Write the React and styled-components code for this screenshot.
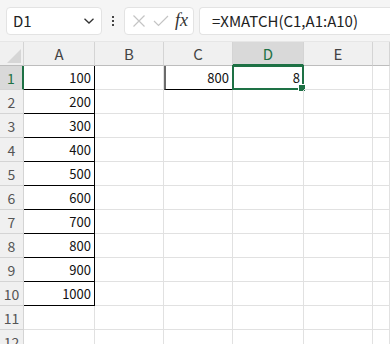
import React from "react";
import styled, { createGlobalStyle } from "styled-components";

const GlobalStyle = createGlobalStyle`
  body {
    margin: 0;
    background: #ffffff;
    font-family: "Noto Sans CJK JP", "Noto Sans", sans-serif;
  }
`;

const GREEN = "#1e7145";
const GRID = "#e1e1e1";

const columns = ["A", "B", "C", "D", "E", ""];
const colWidths = "24px 71px 69px 69px 71px 69px 1fr";
const colA = [100, 200, 300, 400, 500, 600, 700, 800, 900, 1000];

const Page = styled.div`
  width: 390px;
  height: 344px;
  overflow: hidden;
  background: #fff;
`;

const Toolbar = styled.div`
  height: 41px;
  box-sizing: border-box;
  background: #f5f5f5;
  display: flex;
  align-items: center;
  padding: 0 0 0 6px;
`;

const Box = styled.div`
  height: 28px;
  box-sizing: border-box;
  background: #fff;
  border: 1px solid #e3e3e3;
  border-radius: 4px;
  display: flex;
  align-items: center;
`;

const NameBox = styled(Box)`
  width: 96px;
  padding: 0 6px;
  justify-content: space-between;
  font-size: 15px;
  color: #222;
`;

const Dots = styled.div`
  width: 22px;
  display: flex;
  flex-direction: column;
  align-items: center;
  gap: 2px;

  span {
    width: 2px;
    height: 2px;
    background: #444;
  }
`;

const Controls = styled(Box)`
  width: 70px;
  padding: 0 5px 0 7px;
  justify-content: space-between;
`;

const Fx = styled.span`
  font-family: "Liberation Serif", serif;
  font-style: italic;
  font-size: 18px;
  color: #333;
`;

const FormulaBox = styled(Box)`
  flex: 1;
  margin-left: 5px;
  border-right: none;
  border-radius: 4px 0 0 4px;
  padding-left: 12px;
  font-size: 15px;
  color: #222;
`;

const Sheet = styled.div`
  display: grid;
  grid-template-columns: ${colWidths};
  grid-auto-rows: 24px;
  border-top: 1px solid #e6e6e6;
`;

const Corner = styled.div`
  background: #f0f0f0;
  border-right: 1px solid #d4d4d4;
  border-bottom: 1px solid #bdbdbd;
  display: flex;
  align-items: flex-end;
  justify-content: flex-end;
  padding: 0 2px 2px 0;
  box-sizing: border-box;
`;

const ColHead = styled.div`
  background: ${(p) => (p.$active ? "#d9d9d9" : "#f0f0f0")};
  color: ${(p) => (p.$active ? GREEN : "#444")};
  border-right: 1px solid #d4d4d4;
  border-bottom: ${(p) => (p.$active ? `2px solid ${GREEN}` : "1px solid #bdbdbd")};
  box-sizing: border-box;
  display: flex;
  align-items: center;
  justify-content: center;
  font-size: 15px;
`;

const RowHead = styled.div`
  background: ${(p) => (p.$active ? "#d9d9d9" : "#f0f0f0")};
  color: ${(p) => (p.$active ? GREEN : "#555")};
  border-right: ${(p) => (p.$active ? `2px solid ${GREEN}` : "1px solid #d4d4d4")};
  border-bottom: 1px solid #d4d4d4;
  box-sizing: border-box;
  display: flex;
  align-items: center;
  justify-content: center;
  font-size: 14px;
`;

const Cell = styled.div`
  position: relative;
  box-sizing: border-box;
  border-right: 1px solid ${(p) => (p.$boxed ? "#000" : GRID)};
  border-bottom: 1px solid ${(p) => (p.$boxed || p.$under ? "#000" : GRID)};
  border-left: ${(p) => (p.$leftMark ? "2px solid #6b6b6b" : "none")};
  display: flex;
  align-items: center;
  justify-content: flex-end;
  padding-right: 3px;
  font-size: 13px;
  color: #111;
`;

const Selection = styled.div`
  position: absolute;
  inset: -1px;
  border: 2px solid ${GREEN};
  pointer-events: none;
`;

const Handle = styled.div`
  position: absolute;
  right: -4px;
  bottom: -4px;
  width: 6px;
  height: 6px;
  background: ${GREEN};
  border: 1px solid #fff;
`;

const CellValue = styled.span`
  position: relative;
  z-index: 1;
`;

const ChevronIcon = () => (
  <svg width="12" height="8" viewBox="0 0 12 8">
    <path d="M1.5 1.8 L6 6 L10.5 1.8" fill="none" stroke="#333" strokeWidth="1.3" />
  </svg>
);

const CrossIcon = () => (
  <svg width="14" height="14" viewBox="0 0 14 14">
    <path d="M1.5 1.5 L12.5 12.5 M12.5 1.5 L1.5 12.5" stroke="#c4c4c4" strokeWidth="1.2" />
  </svg>
);

const CheckIcon = () => (
  <svg width="16" height="12" viewBox="0 0 16 12">
    <path d="M1 6 L5.5 10.5 L15 1" fill="none" stroke="#c4c4c4" strokeWidth="1.2" />
  </svg>
);

const CornerTriangle = () => (
  <svg width="14" height="14" viewBox="0 0 14 14">
    <path d="M14 0 L14 14 L0 14 Z" fill="#d6d6d6" />
  </svg>
);

const renderCell = (row, col) => {
  const key = `${row}-${col}`;
  if (col === 0 && row <= 10) {
    return (
      <Cell key={key} $boxed>
        <CellValue>{colA[row - 1]}</CellValue>
      </Cell>
    );
  }
  if (row === 1 && col === 2) {
    return (
      <Cell key={key} $under $leftMark>
        <CellValue>800</CellValue>
      </Cell>
    );
  }
  if (row === 1 && col === 3) {
    return (
      <Cell key={key}>
        <CellValue>8</CellValue>
        <Selection>
          <Handle />
        </Selection>
      </Cell>
    );
  }
  return <Cell key={key} />;
};

const App = () => {
  const rows = Array.from({ length: 12 }, (_, i) => i + 1);
  return (
    <Page>
      <GlobalStyle />
      <Toolbar>
        <NameBox>
          <span>D1</span>
          <ChevronIcon />
        </NameBox>
        <Dots>
          <span />
          <span />
          <span />
        </Dots>
        <Controls>
          <CrossIcon />
          <CheckIcon />
          <Fx>fx</Fx>
        </Controls>
        <FormulaBox>=XMATCH(C1,A1:A10)</FormulaBox>
      </Toolbar>
      <Sheet>
        <Corner>
          <CornerTriangle />
        </Corner>
        {columns.map((c, i) => (
          <ColHead key={i} $active={c === "D"}>
            {c}
          </ColHead>
        ))}
        {rows.map((r) => (
          <React.Fragment key={r}>
            <RowHead $active={r === 1}>{r}</RowHead>
            {columns.map((_, ci) => renderCell(r, ci))}
          </React.Fragment>
        ))}
      </Sheet>
    </Page>
  );
};

export default App;
